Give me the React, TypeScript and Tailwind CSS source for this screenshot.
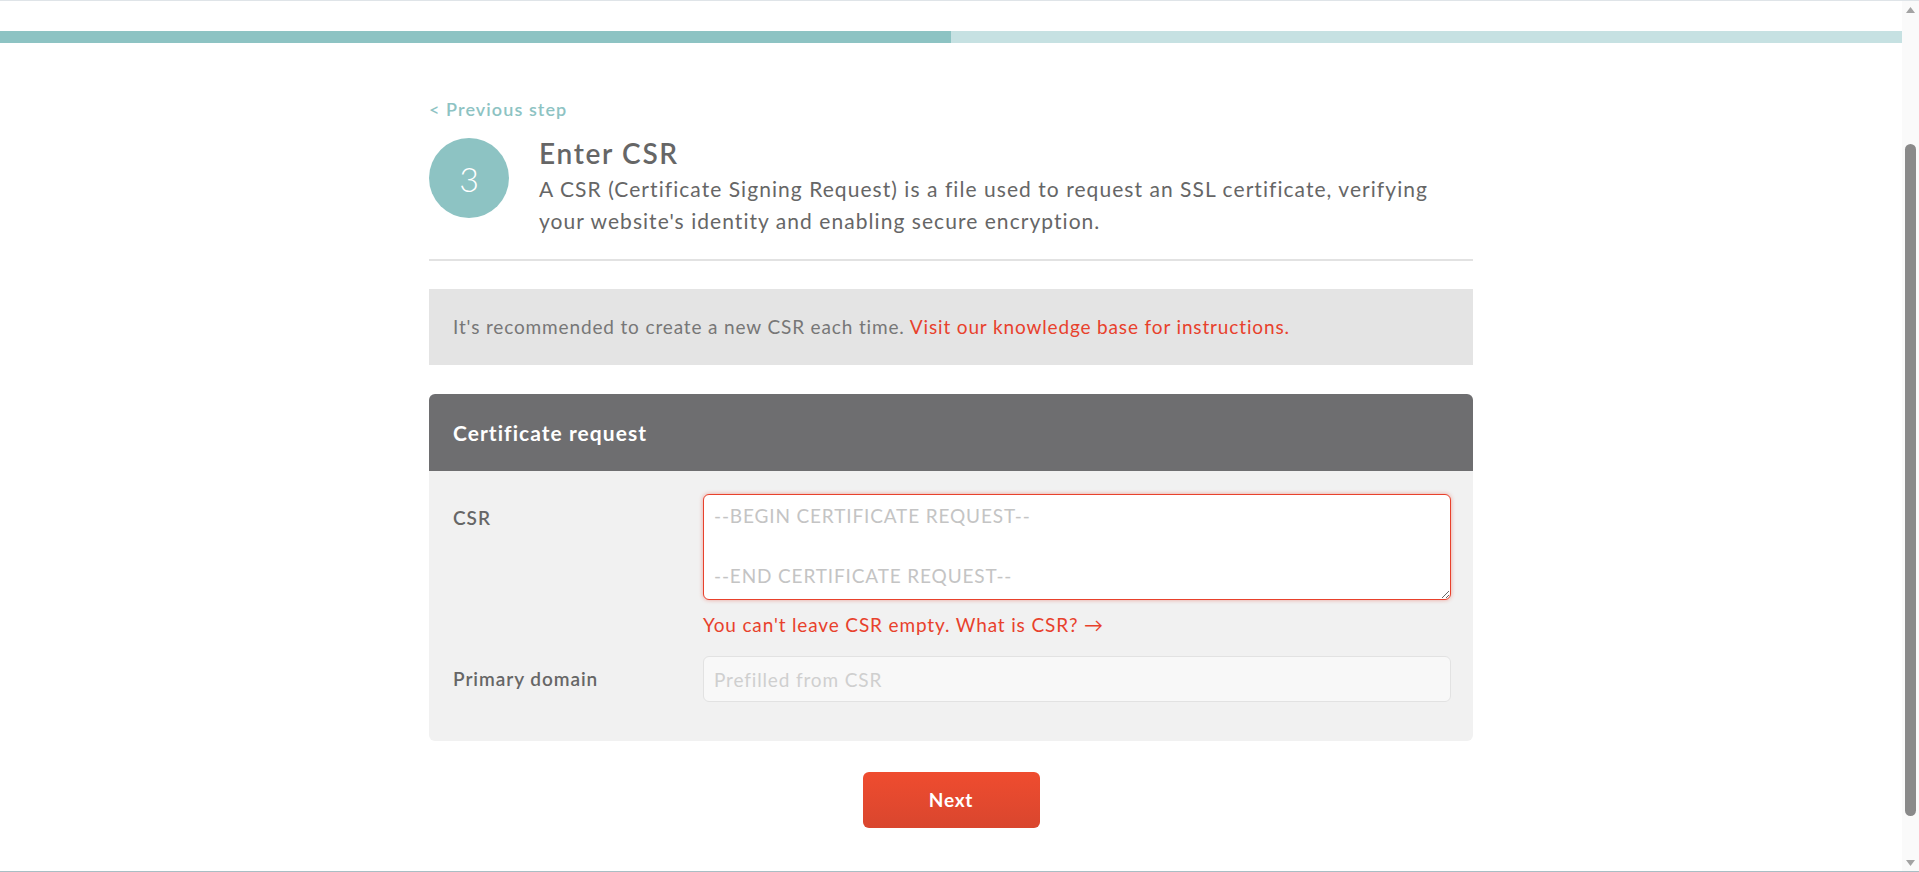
export default function App() {
  return (
    <div className="h-[872px] flex border-t border-t-[#dfe4e8] border-b border-b-[#a9bec4] bg-white font-['Lato',sans-serif] overflow-hidden">
      <main className="flex-1 flex flex-col">
        {/* step progress */}
        <div className="mt-[30px] h-[12px] flex bg-[#c6e1e2]">
          <div className="w-1/2 bg-[#8dc3c3]" />
        </div>

        <div className="w-[1044px] mx-auto">
          <a href="#" className="block mt-[54px] text-[18px] leading-6 font-semibold tracking-[0.06em] text-[#8dc3c3]">
            &lt; Previous step
          </a>

          <div className="mt-[15px] flex items-start gap-[30px]">
            <div className="mt-[2px] w-[80px] h-[80px] shrink-0 rounded-full bg-[#8dc3c3] flex items-center justify-center text-white text-[34px] font-light">
              3
            </div>
            <div>
              <h1 className="text-[28px] leading-[34px] font-semibold tracking-[0.06em] text-[#666]">Enter CSR</h1>
              <p className="mt-[3px] text-[21px] leading-[32px] tracking-[0.05em] text-[#666]">
                A CSR (Certificate Signing Request) is a file used to request an SSL certificate, verifying
                <br />
                your website's identity and enabling secure encryption.
              </p>
            </div>
          </div>

          <div className="mt-[22px] h-[2px] bg-[#e2e2e2]" />

          <div className="mt-[28px] bg-[#e4e4e4] px-6 py-6 text-[19px] leading-[28px] tracking-[0.045em] text-[#777]">
            It's recommended to create a new CSR each time.{" "}
            <a href="#" className="text-[#e8412c]">Visit our knowledge base for instructions.</a>
          </div>

          {/* Certificate request card */}
          <div className="mt-[29px] rounded-md overflow-hidden">
            <div className="h-[77px] px-6 flex items-center bg-[#6e6e70] text-white text-[21px] font-bold tracking-[0.05em]">
              Certificate request
            </div>
            <div className="bg-[#f1f1f1] pt-[23px] pb-[39px] pl-6 pr-[22px]">
              <div className="grid grid-cols-[250px_1fr]">
                <label className="pt-3 text-[19px] leading-6 font-semibold tracking-[0.05em] text-[#666]">CSR</label>
                <div>
                  <textarea
                    rows={3}
                    placeholder={"--BEGIN CERTIFICATE REQUEST--\n\n--END CERTIFICATE REQUEST--"}
                    className="block w-full h-[106px] resize-y rounded-md border border-[#e8412c] bg-white pl-[10px] pr-3 pt-[6px] pb-2 text-[19px] leading-[30px] tracking-[0.045em] text-[#666] placeholder:text-[#c4c4c4] shadow-[0_0_4px_rgba(232,65,44,0.45)] outline-none"
                  />
                  <div className="mt-[13px] text-[19px] leading-6 tracking-[0.045em] text-[#e8412c]">
                    You can't leave CSR empty. What is CSR? →
                  </div>
                </div>
              </div>

              <div className="mt-[19px] grid grid-cols-[250px_1fr] items-center">
                <label className="text-[19px] leading-6 font-semibold tracking-[0.05em] text-[#666]">Primary domain</label>
                <input
                  type="text"
                  disabled
                  placeholder="Prefilled from CSR"
                  className="h-[46px] w-full rounded-md border border-[#e2e2e2] bg-[#f8f8f8] px-[10px] text-[19px] tracking-[0.045em] placeholder:text-[#cfcfcf] outline-none"
                />
              </div>
            </div>
          </div>

          <div className="mt-[31px] flex justify-center">
            <button className="w-[177px] h-[56px] rounded-md bg-gradient-to-b from-[#ef4c2f] to-[#d9462e] text-white text-[19px] font-bold tracking-[0.04em]">
              Next
            </button>
          </div>
        </div>
      </main>

      {/* window scrollbar */}
      <div className="w-[17px] shrink-0 flex flex-col bg-[#fafafa]">
        <div className="h-[17px] flex items-center justify-center">
          <svg width="9" height="6" viewBox="0 0 9 6">
            <path d="M4.5 0L9 6H0z" fill="#a3a3a3" />
          </svg>
        </div>
        <div className="flex-1 pt-[126px] flex justify-center">
          <div className="w-[11px] h-[672px] rounded-full bg-[#8a8a8a]" />
        </div>
        <div className="h-[17px] flex items-center justify-center">
          <svg width="9" height="6" viewBox="0 0 9 6">
            <path d="M0 0H9L4.5 6z" fill="#a3a3a3" />
          </svg>
        </div>
      </div>
    </div>
  );
}
